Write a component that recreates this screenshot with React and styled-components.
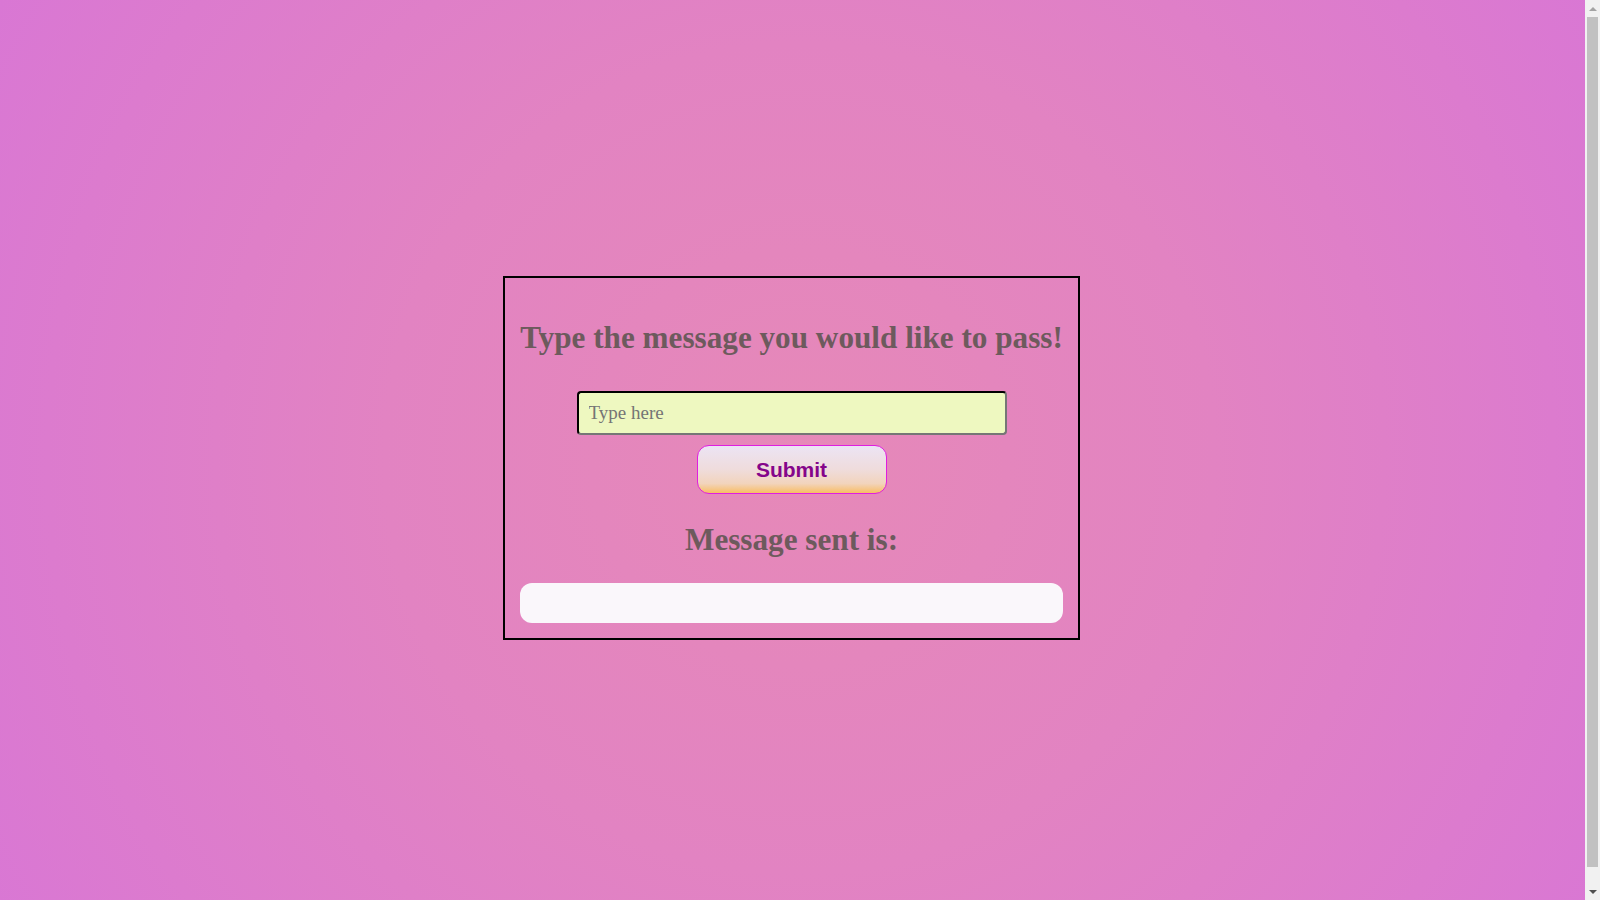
import { useState } from "react";
import styled, { createGlobalStyle } from "styled-components";

const GlobalStyle = createGlobalStyle`
  html {
    background: radial-gradient(circle at 50% 50%, #e689b8 0%, #e283c2 45%, #d977d4 100%);
    min-height: 100%;
  }
  body {
    margin: 8px 25px 8px 8px;
    height: 100vh;
    display: flex;
    align-items: center;
    justify-content: center;
    font-family: "Liberation Serif", "Times New Roman", serif;
  }
`;

// stands in for the browser's classic scrollbar seen in the screenshot
const ScrollTrack = styled.div`
  position: fixed;
  top: 0;
  right: 0;
  width: 15px;
  height: 100vh;
  background: #f1f1f1;
  display: flex;
  flex-direction: column;
  align-items: center;
`;

const ScrollArrow = styled.div`
  height: 17px;
  width: 15px;
  display: flex;
  align-items: center;
  justify-content: center;
  &::after {
    content: "";
    border-left: 4px solid transparent;
    border-right: 4px solid transparent;
    ${(p) =>
      p.$down
        ? "border-top: 4px solid #505050;"
        : "border-bottom: 4px solid #a3a3a3;"}
  }
`;

const ScrollThumb = styled.div`
  flex: 1;
  width: 11px;
  margin: 0 0 16px;
  background: #c1c1c1;
`;

const Panel = styled.div`
  border: 2px solid #000;
  padding: 15px;
  width: 543px;
  display: flex;
  flex-direction: column;
  align-items: center;
`;

const Title = styled.h1`
  margin: ${(p) => p.$margin};
  font-family: "Liberation Serif", "Times New Roman", serif;
  font-size: 31.2px;
  line-height: 36px;
  font-weight: bold;
  color: #6d5a5d;
  text-align: center;
  white-space: nowrap;
`;

const Input = styled.input`
  box-sizing: border-box;
  width: 430px;
  height: 44px;
  padding: 0 10px;
  border: 2px inset #767676;
  border-top-color: #222;
  border-left-color: #222;
  border-radius: 4px;
  background: #eef8c0;
  font-family: "Liberation Serif", "Times New Roman", serif;
  font-size: 19px;
  color: #333;
  outline: none;
  &::placeholder {
    color: #757575;
  }
`;

const SubmitButton = styled.button`
  box-sizing: border-box;
  margin-top: 10px;
  width: 190px;
  height: 49px;
  padding: 0;
  border: 1px solid #e01ee0;
  border-radius: 12px;
  background: linear-gradient(to bottom, #ece4f4 0%, #efdcdc 50%, #f2d4bc 80%, #f8bd64 100%);
  font-family: "Liberation Sans", Arial, sans-serif;
  font-size: 21px;
  font-weight: bold;
  color: #85058a;
  cursor: pointer;
`;

const Output = styled.div`
  box-sizing: border-box;
  width: 543px;
  height: 40px;
  border-radius: 12px;
  background: #faf7fb;
  padding: 0 14px;
  display: flex;
  align-items: center;
  font-family: "Liberation Serif", "Times New Roman", serif;
  font-size: 18px;
  color: #333;
`;

export default function App() {
  const [text, setText] = useState("");
  const [sent, setSent] = useState("");

  return (
    <>
      <GlobalStyle />
      <Panel>
        <Title $margin="27px 0 35px">Type the message you would like to pass!</Title>
        <Input
          placeholder="Type here"
          value={text}
          onChange={(e) => setText(e.target.value)}
        />
        <SubmitButton onClick={() => setSent(text)}>Submit</SubmitButton>
        <Title $margin="28px 0 25px">Message sent is:</Title>
        <Output>{sent}</Output>
      </Panel>
      <ScrollTrack>
        <ScrollArrow />
        <ScrollThumb />
        <ScrollArrow $down />
      </ScrollTrack>
    </>
  );
}
